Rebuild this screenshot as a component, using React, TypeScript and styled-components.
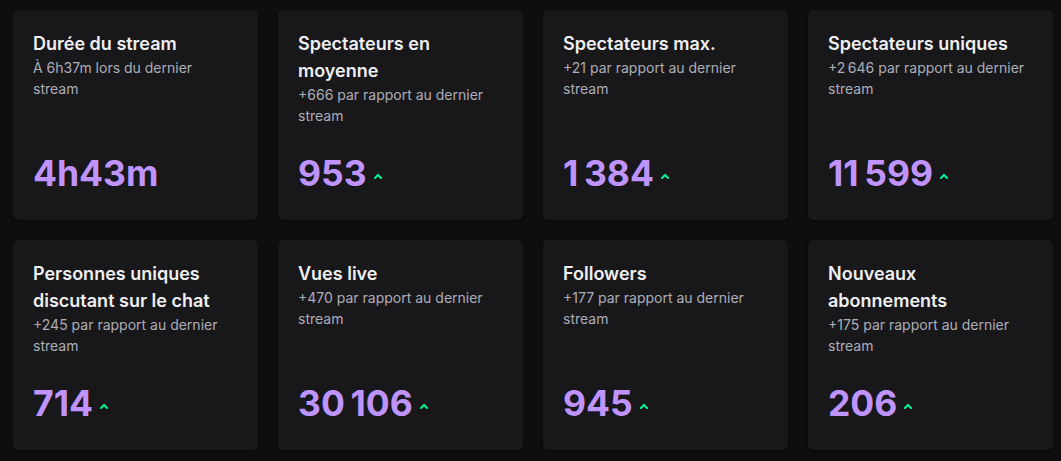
import React from "react";
import styled, { createGlobalStyle } from "styled-components";

const GlobalStyle = createGlobalStyle`
  html, body {
    margin: 0;
    padding: 0;
    background: #0e0e10;
  }
  body {
    font-family: Inter, "Noto Sans", "DejaVu Sans", sans-serif;
    -webkit-font-smoothing: antialiased;
  }
`;

const Page = styled.div`
  background: #0e0e10;
  min-height: 461px;
  box-sizing: border-box;
  padding: 10px 8px 11px 13px;
`;

const Grid = styled.div`
  display: grid;
  grid-template-columns: repeat(4, 245px);
  grid-auto-rows: 210px;
  column-gap: 20px;
  row-gap: 20px;
`;

const Card = styled.div`
  background: #18181b;
  border-radius: 5px;
  box-shadow: 0 1px 2px rgba(0, 0, 0, 0.5);
  padding: 20px 20px 25px 20px;
  box-sizing: border-box;
  display: flex;
  flex-direction: column;
`;

const Title = styled.div`
  color: #efeff1;
  font-size: 18px;
  font-weight: 600;
  line-height: 27px;
`;

const Subtitle = styled.div`
  color: #adadb8;
  font-size: 14px;
  font-weight: 400;
  line-height: 21px;
`;

const ValueRow = styled.div`
  margin-top: auto;
  display: flex;
  align-items: center;
  gap: 7px;
`;

const Value = styled.span`
  color: #bf94ff;
  font-size: 35.5px;
  font-weight: 700;
  line-height: 43px;
`;

const Arrow = styled.svg`
  width: 8px;
  height: 6px;
  margin-top: 4px;
  flex: none;
`;

type Stat = { title: string; sub: string; value: string; up: boolean };

const nn = "\u202F";

const stats: Stat[] = [
  { title: "Durée du stream", sub: "À 6h37m lors du dernier stream", value: "4h43m", up: false },
  { title: "Spectateurs en moyenne", sub: "+666 par rapport au dernier stream", value: "953", up: true },
  { title: "Spectateurs max.", sub: "+21 par rapport au dernier stream", value: `1${nn}384`, up: true },
  { title: "Spectateurs uniques", sub: `+2${nn}646 par rapport au dernier stream`, value: `11${nn}599`, up: true },
  { title: "Personnes uniques discutant sur le chat", sub: "+245 par rapport au dernier stream", value: "714", up: true },
  { title: "Vues live", sub: "+470 par rapport au dernier stream", value: `30${nn}106`, up: true },
  { title: "Followers", sub: "+177 par rapport au dernier stream", value: "945", up: true },
  { title: "Nouveaux abonnements", sub: "+175 par rapport au dernier stream", value: "206", up: true },
];

const UpArrow = () => (
  <Arrow viewBox="0 0 8 6">
    <path d="M1 5 L4 2 L7 5" fill="none" stroke="#00f593" strokeWidth="2" strokeLinecap="square" />
  </Arrow>
);

export default function App() {
  return (
    <>
      <GlobalStyle />
      <Page>
        <Grid>
          {stats.map((s) => (
            <Card key={s.title}>
              <Title>{s.title}</Title>
              <Subtitle>{s.sub}</Subtitle>
              <ValueRow>
                <Value>{s.value}</Value>
                {s.up && <UpArrow />}
              </ValueRow>
            </Card>
          ))}
        </Grid>
      </Page>
    </>
  );
}
